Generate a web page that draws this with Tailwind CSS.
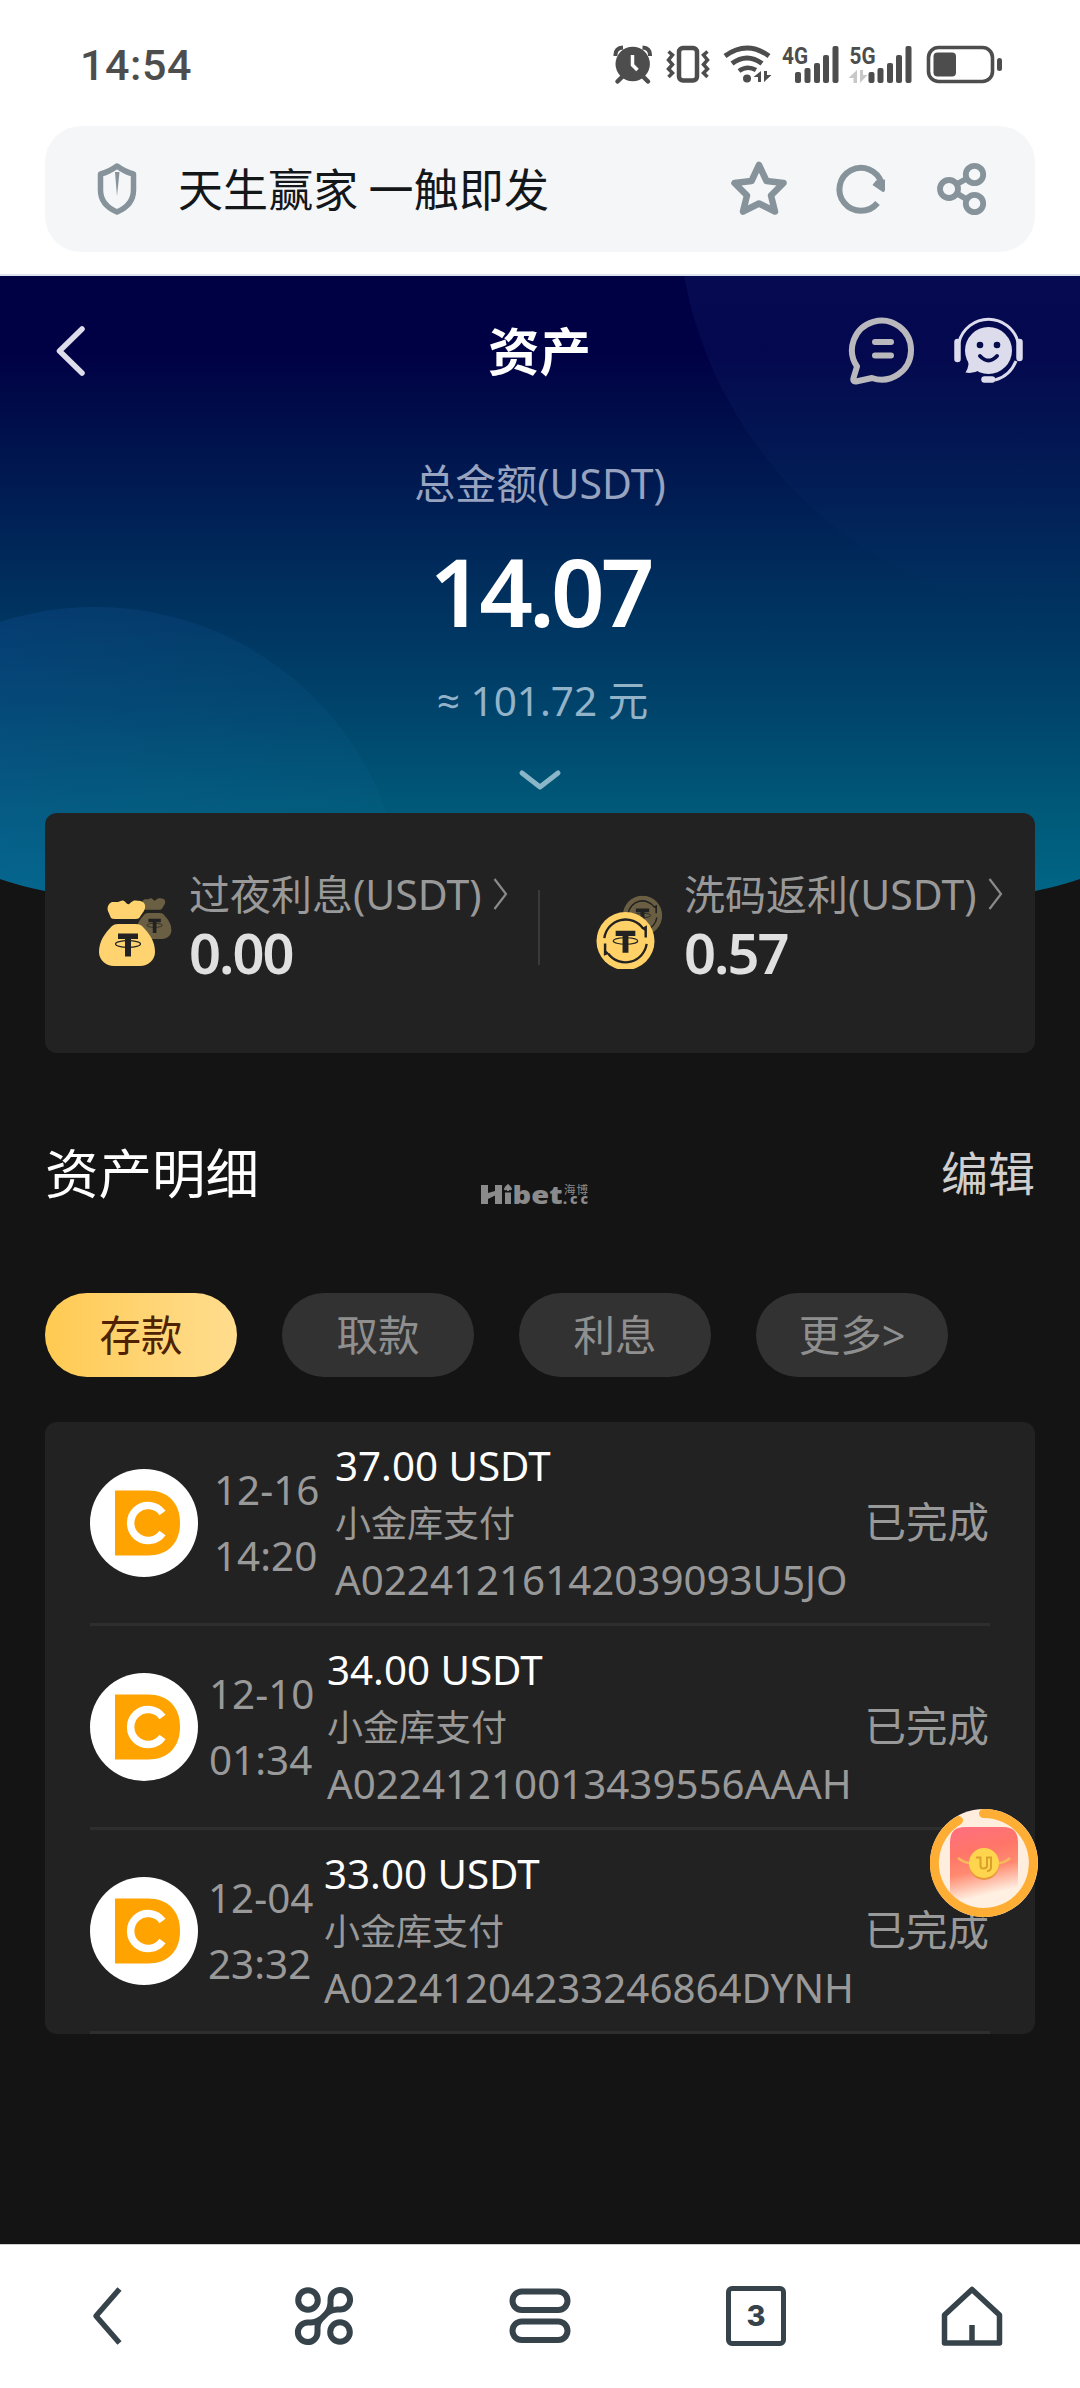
<!DOCTYPE html>
<html lang="zh-CN">
<head>
<meta charset="utf-8">
<title>资产</title>
<script src="https://cdn.jsdelivr.net/npm/@tailwindcss/browser@4"></script>
</head>
<body class="w-[1080px] h-[2388px] flex flex-col overflow-hidden bg-[#141414] font-['Noto_Sans','Noto_Sans_CJK_SC',sans-serif]">

<!-- shared symbols -->
<svg width="0" height="0" class="absolute">
  <defs>
    <symbol id="bag" viewBox="0 0 58 68">
      <path d="M13 19C11 13 8 11 10.500 6C13 1.500 17 3.500 20 3C23 2 24 .8 26 2C28 3 29 6 31 5C33 4 34 1 38 1.500C42 2 46 2 47 6C48 11 44 14 42 18Q41 20 38 20H17Q14 20 13 19Z" fill="currentColor"/>
      <path d="M20 25H38Q42 25 44 27C51 34 57 42 57 53C57 61 50 67 42 67H16C8 67 1 61 1 53C1 42 7 34 14 27Q16 25 20 25Z" fill="currentColor"/>
      <path d="M20 34.500H40V40H33V57.500H27V40H20Z" fill="#222"/>
      <ellipse cx="30" cy="45" rx="12.500" ry="3.300" fill="none" stroke="#222" stroke-width="1.200"/>
    </symbol>
    <symbol id="coin" viewBox="0 0 60 60">
      <circle cx="30" cy="30" r="29.500" fill="currentColor"/>
      <path d="M8.500 27A21.800 21.800 0 0 1 48 17.500M51.500 33A21.800 21.800 0 0 1 12.500 43" fill="none" stroke="#222" stroke-width="2.400"/>
      <path d="M51.800 14V26.500H49.300V19.500L46.500 17ZM8 45V32.500H10.500V40L13.500 43Z" fill="#222"/>
      <path d="M20 19.500H40V25H33V42H27V25H20Z" fill="#222"/>
      <ellipse cx="30" cy="30" rx="12.500" ry="3.300" fill="none" stroke="#222" stroke-width="1.200"/>
    </symbol>
    <symbol id="dc" viewBox="0 0 108 108">
      <circle cx="54" cy="54" r="54" fill="#fff"/>
      <path d="M25 21.500H58C78 21.500 90 34 90 54S78 86.500 58 86.500H25Z" fill="#ffa300"/>
      <path d="M72.500 44A17.500 17.500 0 1 0 72.500 64" fill="none" stroke="#fff" stroke-width="7.500"/>
    </symbol>
  </defs>
</svg>

<!-- status bar -->
<header class="h-[126px] shrink-0 bg-white flex items-start justify-between pl-[80px] pr-[77px] text-[#4d4d4d]">
  <div class="mt-[39px] text-[43px] leading-[52px] font-medium tracking-[.6px] font-[Roboto,sans-serif]">14:54</div>
  <div class="flex mt-[44px]">
    <svg width="40" height="42" viewBox="614 44 40 42" fill="none" stroke="currentColor"><circle cx="633.700" cy="64" r="17.200" fill="currentColor" stroke="none"/><path d="M616.500 56Q616 48 624 47.500M651 56Q651.500 48 643.500 47.500" stroke-width="4"/><path d="M624 76L618.500 81.500M643.500 76L649 81.500" stroke-width="4.500" stroke-linecap="round"/><path d="M633.500 55V65L638.500 70" stroke="#fff" stroke-width="3.500"/></svg>
    <svg class="ml-[12px]" width="46" height="42" viewBox="666 44 46 42" fill="none" stroke="currentColor"><rect x="680" y="48" width="18" height="32.500" rx="4" stroke-width="4.500"/><path d="M669.500 51.500L673.500 55L669.500 60L673.500 64.500L669.500 69L673.500 73L669.500 77M708.500 51.500L704.500 55L708.500 60L704.500 64.500L708.500 69L704.500 73L708.500 77" stroke-width="3.500"/></svg>
    <svg class="ml-[12px]" width="50" height="42" viewBox="724 44 50 42" fill="none" stroke="currentColor"><path d="M726 56Q748 40 770 56" stroke-width="5"/><path d="M733 63.500Q748 52.500 763 63.500" stroke-width="5"/><path d="M740 71Q748 65 757 70" stroke-width="4.500"/><circle cx="748" cy="78.500" r="4" fill="currentColor" stroke="none"/><path d="M762 71V82H759V77H754.500ZM765 82V71H768V75H772.500Z" fill="currentColor" stroke="none"/></svg>
    <svg class="ml-[8px] overflow-visible" width="58" height="42" viewBox="782 44 58 42" fill="currentColor"><text x="783" y="64" font-size="24.500" font-weight="700" font-family="Roboto" textLength="26" lengthAdjust="spacingAndGlyphs">4G</text><rect x="796" y="72" width="6" height="11" rx="2"/><rect x="805.500" y="68" width="6" height="15" rx="2"/><rect x="815" y="63" width="6" height="20" rx="2"/><rect x="824" y="55" width="6" height="28" rx="2"/><rect x="833.500" y="46" width="6" height="37" rx="2"/></svg>
    <svg class="ml-[8px] overflow-visible" width="66" height="42" viewBox="848 44 66 42" fill="currentColor"><text x="850.500" y="64" font-size="24.500" font-weight="700" font-family="Roboto" textLength="26" lengthAdjust="spacingAndGlyphs">5G</text><path d="M858 70V83H854.500V78H849.500ZM861 83V70H864V75H868.500Z" fill="#c8c8c8"/><rect x="869.500" y="72" width="6" height="11" rx="2"/><rect x="878.500" y="68" width="6" height="15" rx="2"/><rect x="888" y="63" width="6" height="20" rx="2"/><rect x="897" y="55" width="6" height="28" rx="2"/><rect x="906.500" y="46" width="6" height="37" rx="2"/></svg>
    <svg class="ml-[12px]" width="78" height="42" viewBox="926 44 78 42" fill="none" stroke="currentColor"><rect x="929.500" y="47.500" width="64" height="34" rx="10" stroke-width="3.600"/><rect x="934.500" y="52.500" width="22.500" height="24" rx="4" fill="currentColor" stroke="none"/><rect x="998" y="58" width="5" height="13" rx="2.500" fill="currentColor" stroke="none"/></svg>
  </div>
</header>

<!-- browser address bar -->
<div class="h-[150px] shrink-0 bg-white border-b-2 border-[#dde4ee] px-[45px]">
  <div class="h-[126px] rounded-[36px] bg-[#f4f6f8] flex items-center pl-[48px] pr-[44px] text-[#87939a]">
    <svg width="48" height="54" viewBox="93 162 48 54" fill="none" stroke="currentColor" stroke-width="5.500" stroke-linejoin="round"><path d="M117 166Q125 172 133.500 174V190Q133.500 205 117 212Q100.500 205 100.500 190V174Q109 172 117 166Z"/><path d="M115 172L117 196L119.500 172Z" fill="currentColor" stroke="none"/></svg>
    <div class="ml-[37px] -mt-[3px] text-[45px] leading-[60px] text-[#14171a] font-['Noto_Sans_CJK_SC',sans-serif] tracking-[.1px] whitespace-nowrap">天生赢家 一触即发</div>
    <div class="ml-auto flex items-center">
      <svg width="60" height="60" viewBox="729 159 60 60" fill="none" stroke="currentColor" stroke-width="6.500" stroke-linejoin="round"><path d="M759 165L766.500 181L783.500 183L771 195.500L775 211.500L759 203.500L743 211.500L747 195.500L734.500 183L751.500 181Z"/></svg>
      <svg class="ml-[42px]" width="60" height="60" viewBox="831 159 60 60" fill="none" stroke="currentColor" stroke-width="6"><path d="M877.500 203A21.500 21.500 0 1 1 881.500 183"/><path d="M885 179.500V190Q884.500 193 882 191.500L872.500 185L876 180.500Z" fill="currentColor" stroke="none"/></svg>
      <svg class="ml-[42px]" width="58" height="60" viewBox="933 159 58 60" fill="none" stroke="currentColor" stroke-width="5.800"><circle cx="949" cy="189" r="9"/><circle cx="974.500" cy="174.500" r="8.700"/><circle cx="974.500" cy="203.500" r="8.700"/><path d="M957 184L967 178.500M957 193.500L967 199.500"/></svg>
    </div>
  </div>
</div>

<!-- page -->
<main class="relative h-[1968px] shrink-0 flex flex-col">
  <svg class="absolute inset-x-0 top-0" width="1080" height="690" viewBox="0 276 1080 690">
    <defs>
      <linearGradient id="sky" gradientUnits="userSpaceOnUse" x1="0" y1="276" x2="0" y2="890"><stop offset="0" stop-color="#000044"/><stop offset=".12" stop-color="#000044"/><stop offset=".32" stop-color="#001850"/><stop offset=".5" stop-color="#002e5d"/><stop offset=".7" stop-color="#00436b"/><stop offset=".86" stop-color="#005878"/><stop offset="1" stop-color="#006585"/></linearGradient>
      <linearGradient id="c1" x1="0" y1="0" x2="0" y2="1"><stop offset=".55" stop-color="#2850b0" stop-opacity=".14"/><stop offset=".8" stop-color="#2850a0" stop-opacity=".07"/><stop offset="1" stop-color="#2850a0" stop-opacity="0"/></linearGradient>
      <linearGradient id="c2" gradientUnits="userSpaceOnUse" x1="0" y1="700" x2="390" y2="760"><stop offset="0" stop-color="#2068c0" stop-opacity=".17"/><stop offset="1" stop-color="#2080b0" stop-opacity=".06"/></linearGradient>
      <clipPath id="hero"><path d="M0 276H1080V879Q1060 886 1035 891L540 960L45 891Q20 886 0 879Z"/></clipPath>
    </defs>
    <g clip-path="url(#hero)"><rect y="276" width="1080" height="690" fill="url(#sky)"/><circle cx="1095" cy="200" r="418" fill="url(#c1)"/><circle cx="95" cy="917" r="310" fill="url(#c2)"/></g>
  </svg>

  <div class="relative h-[150px] shrink-0 flex items-center justify-between pl-[56px] pr-[56px]">
    <svg width="175" height="52" viewBox="56 325 175 52" fill="none" stroke="#dcdcea" stroke-width="5.500" stroke-linecap="round" stroke-linejoin="round"><path d="M82 329L59.500 351L82 373"/></svg>
    <h1 class="-mt-[5px] text-[51.500px] leading-[72px] font-bold text-white font-['Noto_Sans_CJK_SC',sans-serif]">资产</h1>
    <div class="flex">
      <svg width="67" height="72" viewBox="848 316 67 72" fill="none" stroke="#b9b9bd" stroke-width="6" stroke-linejoin="round" stroke-linecap="round"><path d="M857 367.500A29.500 29.500 0 1 1 872 379L856 382.500Q852.500 383 853.500 379Z"/><path d="M875 343H891M875 356.500H891"/></svg>
      <svg class="ml-[38px]" width="71" height="72" viewBox="953 316 71 72" fill="none" stroke="#dcdcec"><circle cx="988.500" cy="351.500" r="23.500" fill="#dcdcec" stroke="none"/><path d="M968 358Q970 367 965.500 373.500Q973 375 980 371Z" fill="#dcdcec" stroke="none"/><path d="M959 343A30.500 30.500 0 0 1 1018 343" stroke-width="3"/><path d="M957.500 343V360M1019.500 343V359" stroke-width="6.500" stroke-linecap="round"/><path d="M1016 362Q1010 377 995 381" stroke-width="3"/><path d="M984.500 380.500H992" stroke-width="6.500" stroke-linecap="round"/><circle cx="980" cy="346" r="3.300" fill="#060c4c" stroke="none"/><circle cx="997" cy="346" r="3.300" fill="#060c4c" stroke="none"/><path d="M980 357Q988.500 366 997 357" stroke="#060c4c" stroke-width="4" stroke-linecap="round"/></svg>
    </div>
  </div>

  <section class="relative h-[387px] shrink-0 flex flex-col items-center">
    <div class="mt-[27px] text-[41px] leading-[60px] text-[#97a3bf]">总金额(USDT)</div>
    <div class="mt-[26px] text-[94px] leading-[104px] font-semibold tracking-[-4px] text-white">14.07</div>
    <div class="mt-[28px] pl-[5px] text-[40.500px] leading-[60px] text-[#93b3c9] whitespace-nowrap"><span class="font-['Open_Sans']">≈</span> 101.72 元</div>
    <svg class="mt-[35px]" width="44" height="26" viewBox="518 767 44 26" fill="none" stroke="#8ab6c8" stroke-width="5" stroke-linecap="round" stroke-linejoin="round"><path d="M522 774L540 788L558 774"/></svg>
  </section>

  <section class="relative mx-[45px] h-[240px] shrink-0 rounded-[12px] bg-[#222] flex">
    <div class="w-[495px] flex pl-[54px] pt-[51px] relative">
      <svg width="75" height="75" viewBox="99 894 75 75" class="mt-[30px]"><g opacity=".33" color="#ffdb87"><use href="#bag" x="136" y="897" width="36" height="43"/></g><g color="#ffd470"><use href="#bag" x="98" y="899" width="58" height="68"/></g></svg>
      <div class="ml-[15px] flex flex-col">
        <div class="flex items-center text-[41px] leading-[60px] text-[#999]">过夜利息(USDT)<svg class="ml-[11px]" width="16" height="34" fill="none" stroke="#8a8a8a" stroke-width="2.200"><path d="M1.500 2L13 17L1.500 32"/></svg></div>
        <div class="text-[56px] leading-[56px] font-semibold tracking-[-2px] text-[#e0e0e0]">0.00</div>
      </div>
    </div>
    <div class="w-[2px] h-[75px] mt-[77px] -ml-[2px] bg-[#3a3a3a]"></div>
    <div class="w-[495px] flex pl-[53px] pt-[51px]">
      <svg width="75" height="75" viewBox="594 894 75 75" class="mt-[30px]"><g opacity=".33" color="#ffdb87"><use href="#coin" x="623.500" y="895.500" width="40" height="40"/></g><g color="#ffd166"><use href="#coin" x="597" y="911.500" width="59" height="59"/></g></svg>
      <div class="ml-[16px] flex flex-col">
        <div class="flex items-center text-[41px] leading-[60px] text-[#999]">洗码返利(USDT)<svg class="ml-[11px]" width="16" height="34" fill="none" stroke="#8a8a8a" stroke-width="2.200"><path d="M1.500 2L13 17L1.500 32"/></svg></div>
        <div class="text-[56px] leading-[56px] font-semibold tracking-[-2px] text-[#e0e0e0]">0.57</div>
      </div>
    </div>
  </section>

  <div class="mx-[45px] mt-[78px] h-[80px] shrink-0 flex items-center justify-between">
    <h2 class="w-[400px] text-[53.500px] leading-[80px] text-white font-['Noto_Sans_CJK_SC',sans-serif]">资产明细</h2>
    <div class="flex items-end text-[#8b8b8b] mt-[48px] h-[26px] w-[110px] -ml-[7px]">
      <svg class="overflow-visible" width="110" height="26" viewBox="0 0 110 26" fill="currentColor" font-family="Open Sans">
        <path d="M0 3H7V11L14 9V3H21V22H14V13.500L7 17V22H0Z"/>
        <path d="M27 2Q31 5 31 7.500Q29 9 28 7.800V9H26V7.800Q24 9 23 7.500Q23 5 27 2ZM24 10.500H30V22H24Z"/>
        <text x="31.500" y="22" font-size="25" font-weight="800" textLength="50" lengthAdjust="spacingAndGlyphs">bet</text>
        <text x="83" y="11.500" font-size="11.500" font-family="Noto Sans CJK SC" textLength="24">海博</text>
        <text x="82" y="22" font-size="14" font-weight="800" textLength="25">.cc</text>
      </svg>
    </div>
    <div class="w-[402px] text-right text-[47px] leading-[80px] text-[#cfcfcf] font-['Noto_Sans_CJK_SC',sans-serif]">编辑</div>
  </div>

  <nav class="mx-[45px] mt-[82px] shrink-0 flex gap-[45px] text-[41.500px] leading-[84px] text-center text-[#8f8f8f]">
    <div class="w-[192px] h-[84px] rounded-full bg-linear-to-r from-[#ffca50] to-[#ffdd8e] text-[#4f2203]">存款</div>
    <div class="w-[192px] h-[84px] rounded-full bg-[#323232]">取款</div>
    <div class="w-[192px] h-[84px] rounded-full bg-[#323232]">利息</div>
    <div class="w-[192px] h-[84px] rounded-full bg-[#323232]">更多&gt;</div>
  </nav>

  <section class="mx-[45px] mt-[45px] px-[45px] h-[612px] shrink-0 rounded-[12px] bg-[#222] text-[#999]">
    <div class="h-[204px] border-b-[3px] border-[#2e2e2e] flex items-center">
      <svg width="108" height="108" class="shrink-0"><use href="#dc"/></svg>
      <div class="ml-[16px] w-[121px] text-[40.400px] leading-[66px]">12-16<br>14:20</div>
      <div class="whitespace-nowrap text-[40.300px] leading-[57px]"><div class="text-white">37.00 USDT</div><div class="relative top-px text-[36px]">小金库支付</div><div>A02241216142039093U5JO</div></div>
      <div class="ml-auto pr-px text-[41.500px] whitespace-nowrap">已完成</div>
    </div>
    <div class="h-[204px] border-b-[3px] border-[#2e2e2e] flex items-center">
      <svg width="108" height="108" class="shrink-0"><use href="#dc"/></svg>
      <div class="ml-[11px] w-[118px] text-[40.400px] leading-[66px]">12-10<br>01:34</div>
      <div class="whitespace-nowrap text-[40.300px] leading-[57px]"><div class="text-white">34.00 USDT</div><div class="relative top-px text-[36px]">小金库支付</div><div>A02241210013439556AAAH</div></div>
      <div class="ml-auto pr-px text-[41.500px] whitespace-nowrap">已完成</div>
    </div>
    <div class="h-[204px] border-b-[3px] border-[#2e2e2e] flex items-center">
      <svg width="108" height="108" class="shrink-0"><use href="#dc"/></svg>
      <div class="ml-[10px] w-[116px] text-[40.400px] leading-[66px]">12-04<br>23:32</div>
      <div class="whitespace-nowrap text-[40.300px] leading-[57px]"><div class="text-white">33.00 USDT</div><div class="relative top-px text-[36px]">小金库支付</div><div>A02241204233246864DYNH</div></div>
      <div class="ml-auto pr-px text-[41.500px] whitespace-nowrap">已完成</div>
    </div>
  </section>

  <!-- floating red packet -->
  <svg class="absolute left-[930px] top-[1533px]" width="108" height="108" viewBox="0 0 108 108">
    <defs><linearGradient id="rp" x1="0" y1="0" x2=".2" y2="1"><stop offset="0" stop-color="#ff6f80"/><stop offset=".35" stop-color="#ff7568"/><stop offset=".6" stop-color="#ff8a70"/><stop offset=".92" stop-color="#fff0e2"/></linearGradient><clipPath id="rpc"><circle cx="54" cy="54" r="46"/></clipPath></defs>
    <circle cx="54" cy="54" r="54" fill="#ffeedd"/>
    <path d="M20 98V33Q20 18 35 18H73Q88 18 88 33V98Z" fill="url(#rp)" clip-path="url(#rpc)"/>
    <path d="M28 49Q36 55 42 54M80 49Q73 55 67 54" fill="none" stroke="#f6b95c" stroke-width="2.500"/>
    <circle cx="54" cy="56" r="15" fill="#e8963c"/><circle cx="54" cy="54" r="15" fill="#ffd54e"/>
    <path d="M46 48.500H50.500V57Q50.500 59.500 53.500 59.500T57 57V48.500H61V58Q61 62 57 62" fill="none" stroke="#dba02c" stroke-width="2"/>
    <path d="M53.500 4.500A49.500 49.500 0 1 1 28.500 11.500" fill="none" stroke="#ffae35" stroke-width="9" stroke-linecap="round"/>
  </svg>
</main>

<!-- browser toolbar -->
<footer class="h-[144px] shrink-0 bg-white border-t border-[#cfcfcf] grid grid-cols-5 items-center justify-items-center text-[#37434a] pb-[2px]">
  <svg width="64" height="64" viewBox="76 2284 64 64" fill="none" stroke="currentColor" stroke-width="5.500" stroke-linejoin="round"><path d="M119.500 2289L96 2316L119.500 2343"/></svg>
  <svg width="64" height="64" viewBox="292 2284 64 64" fill="none" stroke="currentColor" stroke-width="6"><circle cx="308" cy="2300" r="9.800"/><circle cx="340" cy="2332" r="9.800"/><path d="M330.500 2308V2300A9.800 9.800 0 1 1 340 2309.500H337Q329 2310 324 2316T311 2322.500H308A9.800 9.800 0 1 0 317.500 2332V2327Q318 2321 324 2316Q330 2311 330.500 2303"/></svg>
  <svg width="64" height="64" viewBox="508 2284 64 64" fill="none" stroke="currentColor" stroke-width="6"><rect x="512.500" y="2291.500" width="55" height="18.500" rx="9.250"/><rect x="512.500" y="2321.500" width="55" height="18.500" rx="9.250"/></svg>
  <div class="w-[60px] h-[60px] rounded-[6px] border-[5.500px] border-[#37434a] flex items-center justify-center text-[29px] leading-[29px] font-extrabold font-[Inter,sans-serif]">3</div>
  <svg width="64" height="64" viewBox="940 2284 64 64" fill="none" stroke="currentColor" stroke-width="5.500" stroke-linejoin="round"><path d="M972 2289.500L999.500 2315V2343H944.500V2315Z"/><path d="M972 2343V2325"/></svg>
</footer>
</body>
</html>
